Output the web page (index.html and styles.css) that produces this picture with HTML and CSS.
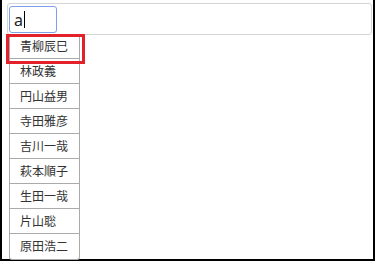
FILE: index.html
```html
<!DOCTYPE html>
<html lang="ja">
<head>
<meta charset="utf-8">
<link rel="stylesheet" href="styles.css">
</head>
<body>
<div class="frame">
  <div class="field">
    <div class="entry"><span class="typed">a</span><span class="caret"></span></div>
  </div>
  <ul class="menu">
    <li>青柳辰巳</li>
    <li>林政義</li>
    <li>円山益男</li>
    <li>寺田雅彦</li>
    <li>吉川一哉</li>
    <li>萩本順子</li>
    <li>生田一哉</li>
    <li>片山聡</li>
    <li>原田浩二</li>
  </ul>
  <div class="mark"></div>
</div>
</body>
</html>
```

FILE: styles.css
```css
html, body {
  margin: 0;
  padding: 0;
  background: #fff;
}
body {
  font-family: "Noto Sans CJK JP", "Noto Sans", sans-serif;
}
.frame {
  position: relative;
  box-sizing: border-box;
  width: 375px;
  height: 261px;
  border-left: 2px solid #000;
  border-right: 2px solid #000;
  border-bottom: 2px solid #000;
  padding: 3px 1px 0 5px;
}
.field {
  box-sizing: border-box;
  height: 32px;
  border: 1px solid #d4d4d4;
  border-radius: 3px;
  padding: 2px 1px;
  display: flex;
}
.entry {
  box-sizing: border-box;
  width: 48px;
  height: 27px;
  border: 1px solid #7f9fe8;
  border-radius: 3px;
  display: flex;
  align-items: center;
  padding-left: 4px;
}
.typed {
  font-family: "Noto Sans", "Liberation Sans", sans-serif;
  font-size: 16px;
  color: #222;
  line-height: 1;
}
.caret {
  width: 1px;
  height: 17px;
  background: #000;
  margin-left: 1px;
}
.menu {
  position: absolute;
  left: 7px;
  top: 34px;
  width: 71px;
  margin: 0;
  padding: 0;
  list-style: none;
  box-sizing: border-box;
  border: 1px solid #aaa;
  border-top: none;
  border-radius: 0 0 3px 3px;
  background: #fff;
}
.menu li {
  box-sizing: border-box;
  height: 25px;
  line-height: 24px;
  padding-left: 10px;
  font-size: 12px;
  color: #333;
  border-bottom: 1px solid #aaa;
  white-space: nowrap;
}
.menu li:last-child {
  border-bottom: none;
}
.mark {
  position: absolute;
  left: 4px;
  top: 34px;
  width: 79px;
  height: 30px;
  box-sizing: border-box;
  border: 3px solid #e3212b;
}
```
